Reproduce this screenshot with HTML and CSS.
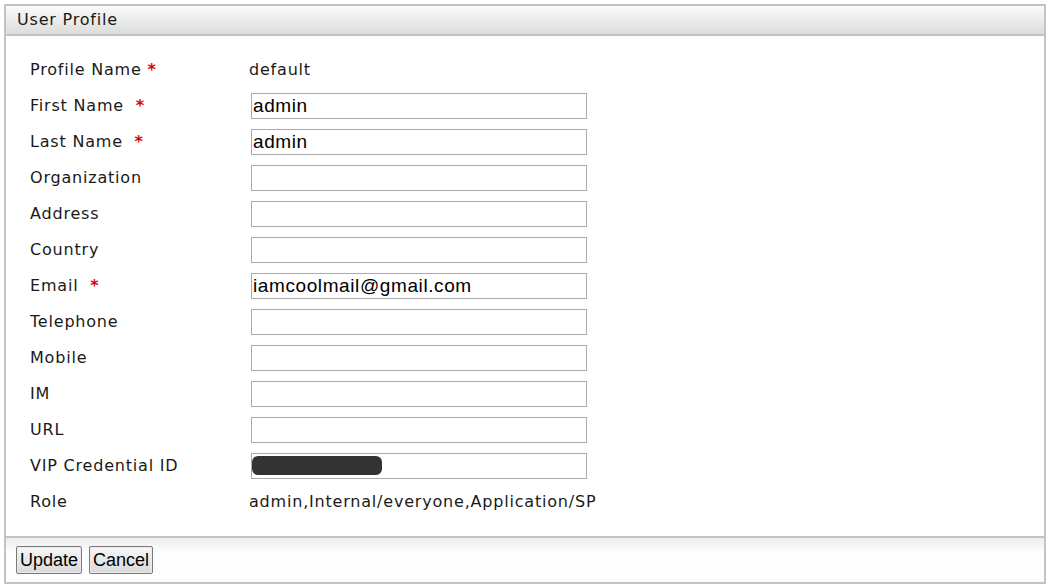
FILE: index.html
```html
<!DOCTYPE html>
<html>
<head>
<meta charset="utf-8">
<link rel="stylesheet" href="styles.css">
</head>
<body>
<div class="panel">
  <div class="panel-head">User Profile</div>
  <div class="panel-body">
    <div class="form">
      <div class="row"><div class="label">Profile Name <span class="req">*</span></div><div class="value text">default</div></div>
      <div class="row"><div class="label">First Name &nbsp;<span class="req">*</span></div><div class="value"><input class="field" value="admin"></div></div>
      <div class="row"><div class="label">Last Name &nbsp;<span class="req">*</span></div><div class="value"><input class="field" value="admin"></div></div>
      <div class="row"><div class="label">Organization</div><div class="value"><input class="field" value=""></div></div>
      <div class="row"><div class="label">Address</div><div class="value"><input class="field" value=""></div></div>
      <div class="row"><div class="label">Country</div><div class="value"><input class="field" value=""></div></div>
      <div class="row"><div class="label">Email &nbsp;<span class="req">*</span></div><div class="value"><input class="field" value="iamcoolmail@gmail.com"></div></div>
      <div class="row"><div class="label">Telephone</div><div class="value"><input class="field" value=""></div></div>
      <div class="row"><div class="label">Mobile</div><div class="value"><input class="field" value=""></div></div>
      <div class="row"><div class="label">IM</div><div class="value"><input class="field" value=""></div></div>
      <div class="row"><div class="label">URL</div><div class="value"><input class="field" value=""></div></div>
      <div class="row"><div class="label">VIP Credential ID</div><div class="value"><div class="field redacted-wrap"><span class="redacted"></span></div></div></div>
      <div class="row"><div class="label">Role</div><div class="value text">admin,Internal/everyone,Application/SP</div></div>
    </div>
  </div>
  <div class="panel-foot">
    <button class="btn">Update</button>
    <button class="btn">Cancel</button>
  </div>
</div>
</body>
</html>
```

FILE: styles.css
```css
html, body {
  margin: 0;
  padding: 0;
  background: #ffffff;
}
body {
  padding: 4px 8px 0 4px;
  font-family: "DejaVu Sans", "Liberation Sans", sans-serif;
  color: #111;
}
.panel {
  border: 2px solid #c3c3c3;
  background: #fff;
}
.panel-head {
  height: 28px;
  line-height: 28px;
  padding-left: 11px;
  font-size: 16px;
  letter-spacing: 0.8px;
  color: #1a1a1a;
  background: linear-gradient(#fbfbfb, #dcdcdc);
  border-bottom: 2px solid #c3c3c3;
}
.panel-body {
  padding: 15px 0 17px 24px;
  height: 468px;
}
.form {
  display: flex;
  flex-direction: column;
}
.row {
  display: flex;
  align-items: center;
  height: 36px;
}
.label {
  width: 221px;
  font-size: 16px;
  letter-spacing: 0.8px;
  color: #1a1a1a;
}
.req {
  color: #e00000;
  font-weight: bold;
  letter-spacing: 0;
}
.value.text {
  margin-left: -2px;
  font-size: 16px;
  letter-spacing: 0.8px;
  color: #1a1a1a;
}
.value {
  display: flex;
  align-items: center;
}
.field {
  box-sizing: border-box;
  width: 336px;
  height: 26px;
  margin: 1px 0 0 0;
  border: 1px solid #ababab;
  padding: 0 1px;
  font-family: "Liberation Sans", Arial, sans-serif;
  font-size: 19px;
  letter-spacing: 0.6px;
  color: #000;
  background: #fff;
  outline: none;
}
.redacted-wrap {
  display: flex;
  align-items: center;
  padding: 0;
}
.redacted {
  display: block;
  width: 130px;
  height: 19px;
  background: #333;
  border-radius: 6px;
}
.panel-foot {
  border-top: 2px solid #c3c3c3;
  height: 44px;
  padding-left: 10px;
  display: flex;
  align-items: center;
  gap: 7px;
  background: linear-gradient(#ececec 0px, #fdfdfd 14px, #fdfdfd);
}
.btn {
  height: 28px;
  padding: 0 3px;
  font-family: "Liberation Sans", Arial, sans-serif;
  font-size: 18px;
  color: #000;
  border: 1px solid #7a7a7a;
  border-radius: 2px;
  background: linear-gradient(#f7f7f7, #d9d9d9);
  box-shadow: inset 0 0 0 1px #eaeaea;
}
```
